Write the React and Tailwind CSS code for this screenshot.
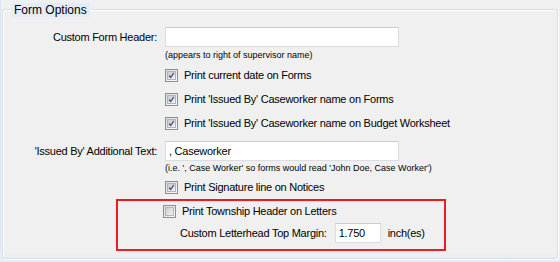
import React from "react";

function Check({ checked }) {
  return (
    <span className="inline-flex h-[13px] w-[13px] shrink-0 items-center justify-center border border-[#8e8f8f] bg-gradient-to-br from-[#dcdcdc] to-[#fbfbfb]">
      <span className="flex h-[9px] w-[9px] items-center justify-center border border-[#b4b4b4] bg-gradient-to-br from-[#cbcbcb] to-[#f4f4f4]">
        {checked && (
          <svg width="9" height="9" viewBox="0 0 9 9">
            <path d="M1.5 4.5 L3.5 7 L7.5 1.2" fill="none" stroke="#3b5199" strokeWidth="1.6" />
          </svg>
        )}
      </span>
    </span>
  );
}

function CheckRow({ checked, label, h = "h-[24px]" }) {
  return (
    <div className={`flex ${h} items-center gap-[6px]`}>
      <Check checked={checked} />
      <span>{label}</span>
    </div>
  );
}

export default function App() {
  return (
    <div
      className="relative h-[262px] w-[560px] overflow-hidden bg-[#f0f0f0] text-[11px] leading-none tracking-[-0.25px] text-black"
      style={{ fontFamily: '"Liberation Sans", Arial, sans-serif' }}
    >
      <div className="absolute inset-y-0 left-0 w-px bg-[#dce7f5]" />
      <div className="absolute inset-x-0 bottom-0 h-[10px] bg-gradient-to-b from-[#f0f0f0] to-[#e3ecf8]" />
      <div className="relative ml-[2px] mt-[9px] h-[250px] w-[556px] rounded-[3px] border border-[#d5dfe5] pt-[17px] shadow-[inset_1px_1px_0_#ffffff,1px_1px_0_#ffffff]">
        <div className="absolute left-[8px] top-[-7px] bg-[#e4ecf8] px-[3px] py-[1px] text-[12px] leading-[12px] tracking-normal">
          Form Options
        </div>

        <div className="grid grid-cols-[154px_1fr] gap-x-[8px]">
          <div className="flex h-[20px] items-center justify-end">Custom Form Header:</div>
          <div className="h-[20px] w-[234px] border border-[#dadde2] border-t-[#c8ccd2] bg-white" />

          <div />
          <div className="flex h-[16px] items-center text-[9px] tracking-normal">(appears to right of supervisor name)</div>

          <div />
          <div>
            <CheckRow checked label="Print current date on Forms" />
            <CheckRow checked label="Print 'Issued By' Caseworker name on Forms" />
            <CheckRow checked label="Print 'Issued By' Caseworker name on Budget Worksheet" />
          </div>

          <div className="mt-[6px] flex h-[20px] items-center justify-end">'Issued By' Additional Text:</div>
          <div className="mt-[6px] flex h-[20px] w-[234px] items-center border border-[#dadde2] border-t-[#c8ccd2] bg-white pl-[3px]">
            , Caseworker
          </div>

          <div />
          <div className="flex h-[14px] items-center text-[9px] tracking-normal">
            (i.e. ', Case Worker' so forms would read 'John Doe, Case Worker')
          </div>

          <div />
          <CheckRow checked label="Print Signature line on Notices" />
        </div>

        <div className="ml-[113px] w-[330px] border-2 border-[#ee1c1c] pl-[45px] pb-[4px]">
          <CheckRow checked={false} label="Print Township Header on Letters" h="h-[20px]" />
          <div className="flex h-[24px] items-center pl-[17px]">
            <span>Custom Letterhead Top Margin:</span>
            <div className="ml-[8px] flex h-[20px] w-[46px] items-center border border-[#dadde2] border-t-[#c8ccd2] bg-white pl-[3px]">
              1.750
            </div>
            <span className="ml-[7px]">inch(es)</span>
          </div>
        </div>
      </div>
    </div>
  );
}
